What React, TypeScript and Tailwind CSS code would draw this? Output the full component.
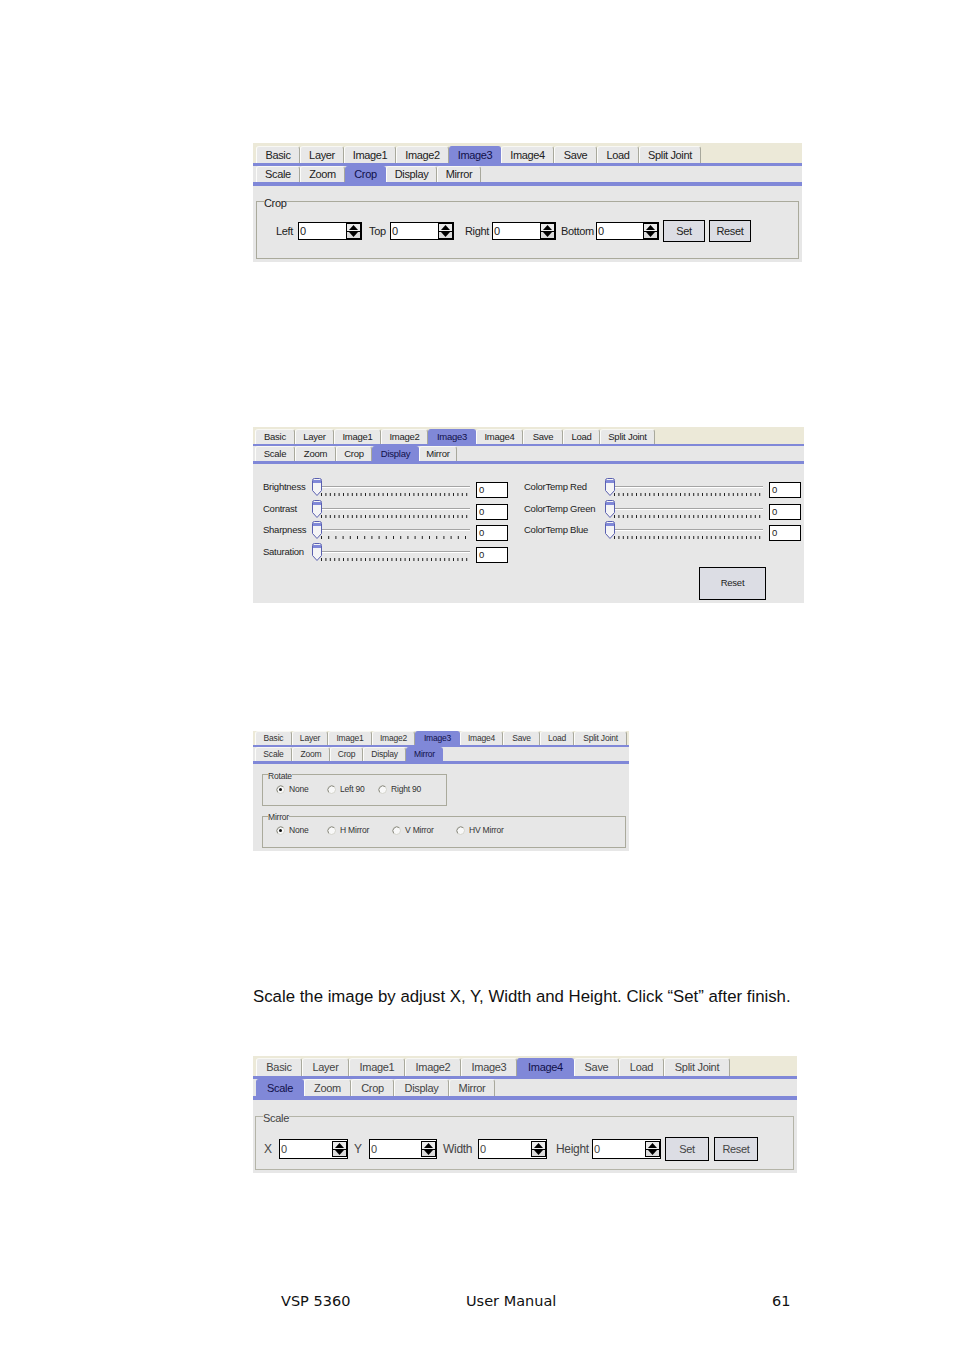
import React from 'react';

type Tab = { label: string; w: string };

const uiFont = "font-['Liberation_Sans',Arial,sans-serif]";

function TabRow({ tabs, active, className }: { tabs: Tab[]; active: string; className: string }) {
  return (
    <div className={`flex items-end ${className}`}>
      {tabs.map((t) => (
        <div
          key={t.label}
          className={`${t.w} flex h-full shrink-0 items-center justify-center overflow-hidden whitespace-nowrap rounded-t-[3px] border-r border-l border-t ${
            t.label === active
              ? 'border-[#8088d8] bg-[#8088d8] text-[#10104a]'
              : 'mt-[1px] border-t-[#f8f8f4] border-l-[#fcfcfa] border-r-[#a8a89c] bg-[#e8e8e8]'
          }`}
        >
          {t.label}
        </div>
      ))}
    </div>
  );
}

function Spinner() {
  return (
    <div className="flex h-[16px] w-[15px] shrink-0 flex-col border border-black bg-[#dcdcdc]">
      <div className="flex flex-1 items-center justify-center border-b border-black bg-[#ececec]">
        <svg width="9" height="5" viewBox="0 0 9 5"><path d="M4.5 0 9 5H0z" fill="#000" /></svg>
      </div>
      <div className="flex flex-1 items-center justify-center">
        <svg width="9" height="5" viewBox="0 0 9 5"><path d="M0 0h9L4.5 5z" fill="#000" /></svg>
      </div>
    </div>
  );
}

function SpinInput({ w, h }: { w: string; h: string }) {
  return (
    <div className={`${w} ${h} flex shrink-0 items-center justify-between border border-black bg-white pl-[1px]`}>
      <span>0</span>
      <Spinner />
    </div>
  );
}

function Thumb() {
  return (
    <svg width="10" height="18" viewBox="0 0 10 18" className="absolute top-0 left-0">
      <path d="M.5 2.5q0-2 2-2h5q2 0 2 2v10L5 17.5.5 12.5z" fill="#f4f4f6" stroke="#5a60b0" />
      <rect x="1" y="2" width="8" height="3" fill="#8088d8" />
    </svg>
  );
}

function Slider({ pitch = 4.4 }: { pitch?: number }) {
  const ticks: number[] = [];
  for (let x = 0; x <= 147; x += pitch) ticks.push(x);
  return (
    <div className="relative h-[18px] w-[158px] shrink-0">
      <div className="absolute top-[8px] left-[8px] h-[2px] w-[150px] border-t border-[#a4a4a4] bg-white" />
      <svg width="150" height="4" className="absolute top-[15px] left-[9px]">
        {ticks.map((x) => (
          <rect key={x} x={x} y="0" width="1" height="3" fill="#222" />
        ))}
      </svg>
      <Thumb />
    </div>
  );
}

function SliderRow({ label, labelW, pitch }: { label: string; labelW: string; pitch?: number }) {
  return (
    <div className="flex h-[21.67px] items-start">
      <div className={`${labelW} pt-[2px] whitespace-nowrap`}>{label}</div>
      <Slider pitch={pitch} />
      <div className="mt-[4px] ml-[6px] flex h-[16px] w-[32px] items-center border border-black bg-white pl-[2px]">0</div>
    </div>
  );
}

function Radio({ on }: { on?: boolean }) {
  return (
    <svg width="9" height="9" viewBox="0 0 9 9" className="shrink-0">
      <circle cx="4.5" cy="4.5" r="4" fill="#f8f8f8" stroke="#d4d4cc" />
      <path d="M1.7 7.3A4 4 0 0 1 7.3 1.7" fill="none" stroke="#8c8c84" />
      {on && <circle cx="4.5" cy="4.5" r="1.5" fill="#111" />}
    </svg>
  );
}

function RadioItem({ label, w, on }: { label: string; w: string; on?: boolean }) {
  return (
    <div className={`${w} flex shrink-0 items-center gap-[4px] whitespace-nowrap`}>
      <Radio on={on} />
      <span>{label}</span>
    </div>
  );
}

function Btn({ label, className }: { label: string; className: string }) {
  return <div className={`${className} flex shrink-0 items-center justify-center border border-black bg-[#dcdde4]`}>{label}</div>;
}

const tabs1: Tab[] = [
  { label: 'Basic', w: 'w-[44px]' },
  { label: 'Layer', w: 'w-[44px]' },
  { label: 'Image1', w: 'w-[52px]' },
  { label: 'Image2', w: 'w-[53px]' },
  { label: 'Image3', w: 'w-[52px]' },
  { label: 'Image4', w: 'w-[53px]' },
  { label: 'Save', w: 'w-[43px]' },
  { label: 'Load', w: 'w-[42px]' },
  { label: 'Split Joint', w: 'w-[62px]' },
];
const sub1: Tab[] = [
  { label: 'Scale', w: 'w-[44px]' },
  { label: 'Zoom', w: 'w-[45px]' },
  { label: 'Crop', w: 'w-[41px]' },
  { label: 'Display', w: 'w-[51px]' },
  { label: 'Mirror', w: 'w-[44px]' },
];
const tabs2: Tab[] = [
  { label: 'Basic', w: 'w-[40px]' },
  { label: 'Layer', w: 'w-[39px]' },
  { label: 'Image1', w: 'w-[47px]' },
  { label: 'Image2', w: 'w-[47px]' },
  { label: 'Image3', w: 'w-[48px]' },
  { label: 'Image4', w: 'w-[47px]' },
  { label: 'Save', w: 'w-[40px]' },
  { label: 'Load', w: 'w-[37px]' },
  { label: 'Split Joint', w: 'w-[55px]' },
];
const sub2: Tab[] = [
  { label: 'Scale', w: 'w-[40px]' },
  { label: 'Zoom', w: 'w-[41px]' },
  { label: 'Crop', w: 'w-[36px]' },
  { label: 'Display', w: 'w-[47px]' },
  { label: 'Mirror', w: 'w-[38px]' },
];
const tabs3: Tab[] = [
  { label: 'Basic', w: 'w-[37px]' },
  { label: 'Layer', w: 'w-[36px]' },
  { label: 'Image1', w: 'w-[44px]' },
  { label: 'Image2', w: 'w-[43px]' },
  { label: 'Image3', w: 'w-[45px]' },
  { label: 'Image4', w: 'w-[43px]' },
  { label: 'Save', w: 'w-[37px]' },
  { label: 'Load', w: 'w-[34px]' },
  { label: 'Split Joint', w: 'w-[53px]' },
];
const sub3: Tab[] = [
  { label: 'Scale', w: 'w-[37px]' },
  { label: 'Zoom', w: 'w-[38px]' },
  { label: 'Crop', w: 'w-[33px]' },
  { label: 'Display', w: 'w-[43px]' },
  { label: 'Mirror', w: 'w-[37px]' },
];
const tabs4: Tab[] = [
  { label: 'Basic', w: 'w-[46px]' },
  { label: 'Layer', w: 'w-[47px]' },
  { label: 'Image1', w: 'w-[56px]' },
  { label: 'Image2', w: 'w-[56px]' },
  { label: 'Image3', w: 'w-[56px]' },
  { label: 'Image4', w: 'w-[57px]' },
  { label: 'Save', w: 'w-[45px]' },
  { label: 'Load', w: 'w-[45px]' },
  { label: 'Split Joint', w: 'w-[66px]' },
];
const sub4: Tab[] = [
  { label: 'Scale', w: 'w-[48px]' },
  { label: 'Zoom', w: 'w-[47px]' },
  { label: 'Crop', w: 'w-[43px]' },
  { label: 'Display', w: 'w-[55px]' },
  { label: 'Mirror', w: 'w-[46px]' },
];

function CropPanel() {
  return (
    <div className={`${uiFont} mt-[143px] h-[119px] w-[549px] bg-[#e7e7e7] text-[11px] tracking-[-0.35px] text-[#222]`}>
      <div className="h-[20px] bg-[#ece9d8] pt-[3px] pl-[3px]">
        <TabRow tabs={tabs1} active="Image3" className="h-[17px]" />
      </div>
      <div className="h-[3px] bg-[#8088d8]" />
      <TabRow tabs={sub1} active="Crop" className="h-[16px] pl-[3px]" />
      <div className="h-[4px] bg-[#8088d8]" />
      <fieldset className="mx-[3px] mt-[7px] h-[66px] border border-[#aaaa9c] pl-[7px]">
        <legend className="pt-[3px] leading-[14px]">Crop</legend>
        <div className="mt-[10px] flex items-center">
          <span className="ml-[12px] w-[22px]">Left</span>
          <SpinInput w="w-[64px]" h="h-[18px]" />
          <span className="ml-[7px] w-[21px]">Top</span>
          <SpinInput w="w-[64px]" h="h-[18px]" />
          <span className="ml-[11px] w-[27px]">Right</span>
          <SpinInput w="w-[64px]" h="h-[18px]" />
          <span className="ml-[5px] w-[35px]">Bottom</span>
          <SpinInput w="w-[63px]" h="h-[18px]" />
          <Btn label="Set" className="ml-[4px] h-[22px] w-[42px]" />
          <Btn label="Reset" className="ml-[4px] h-[22px] w-[42px]" />
        </div>
      </fieldset>
    </div>
  );
}

function DisplayPanel() {
  return (
    <div className={`${uiFont} mt-[165px] h-[176px] w-[551px] bg-[#e7e7e7] text-[9.5px] tracking-[-0.25px] text-[#222]`}>
      <div className="h-[17px] bg-[#ece9d8] pt-[2px] pl-[2px]">
        <TabRow tabs={tabs2} active="Image3" className="h-[15px]" />
      </div>
      <div className="h-[2px] bg-[#8088d8]" />
      <TabRow tabs={sub2} active="Display" className="h-[15px] pl-[2px]" />
      <div className="h-[3px] bg-[#8088d8]" />
      <div className="flex pt-[14px] pl-[10px]">
        <div>
          <SliderRow label="Brightness" labelW="w-[49px]" />
          <SliderRow label="Contrast" labelW="w-[49px]" />
          <SliderRow label="Sharpness" labelW="w-[49px]" pitch={7.2} />
          <SliderRow label="Saturation" labelW="w-[49px]" />
        </div>
        <div className="ml-[16px]">
          <SliderRow label="ColorTemp Red" labelW="w-[81px]" />
          <SliderRow label="ColorTemp Green" labelW="w-[81px]" />
          <SliderRow label="ColorTemp Blue" labelW="w-[81px]" />
          <Btn label="Reset" className="mt-[24px] ml-[175px] h-[33px] w-[67px]" />
        </div>
      </div>
    </div>
  );
}

function MirrorPanel() {
  return (
    <div className={`${uiFont} mt-[128px] h-[120px] w-[376px] bg-[#e7e7e7] text-[8.5px] tracking-[-0.2px] text-[#333]`}>
      <div className="h-[14px] bg-[#ece9d8] pl-[2px]">
        <TabRow tabs={tabs3} active="Image3" className="h-[14px]" />
      </div>
      <div className="h-[2px] bg-[#8088d8]" />
      <TabRow tabs={sub3} active="Mirror" className="h-[14px] pl-[2px]" />
      <div className="h-[3px] bg-[#8088d8]" />
      <fieldset className="mt-[4px] ml-[9px] h-[38px] w-[185px] border border-[#aaaa9c] pl-[5px]">
        <legend className="pt-[3px] leading-[10px]">Rotate</legend>
        <div className="mt-[2px] flex items-center pl-[8px]">
          <RadioItem label="None" w="w-[51px]" on />
          <RadioItem label="Left 90" w="w-[51px]" />
          <RadioItem label="Right 90" w="w-[60px]" />
        </div>
      </fieldset>
      <fieldset className="mt-[4px] ml-[9px] h-[38px] w-[364px] border border-[#aaaa9c] pl-[5px]">
        <legend className="pt-[2px] leading-[10px]">Mirror</legend>
        <div className="mt-[2px] flex items-center pl-[8px]">
          <RadioItem label="None" w="w-[51px]" on />
          <RadioItem label="H Mirror" w="w-[65px]" />
          <RadioItem label="V Mirror" w="w-[64px]" />
          <RadioItem label="HV Mirror" w="w-[70px]" />
        </div>
      </fieldset>
    </div>
  );
}

function ScalePanel() {
  return (
    <div className={`${uiFont} mt-[49px] h-[117px] w-[544px] bg-[#e7e7e7] text-[11px] tracking-[-0.3px] text-[#444]`}>
      <div className="h-[20px] bg-[#ece9d8] pt-[2px] pl-[3px]">
        <TabRow tabs={tabs4} active="Image4" className="h-[18px]" />
      </div>
      <div className="h-[3px] bg-[#8088d8]" />
      <TabRow tabs={sub4} active="Scale" className="h-[17px] pl-[3px]" />
      <div className="h-[4px] bg-[#8088d8]" />
      <fieldset className="mt-[7px] ml-[2px] h-[63px] w-[539px] border border-[#b4b4a8] pl-[7px]">
        <legend className="pt-[4px] leading-[14px]">Scale</legend>
        <div className="mt-[12px] flex items-center">
          <span className="ml-[1px] w-[15px] text-[12px]">X</span>
          <SpinInput w="w-[69px]" h="h-[20px]" />
          <span className="ml-[6px] w-[15px] text-[12px]">Y</span>
          <SpinInput w="w-[68px]" h="h-[20px]" />
          <span className="ml-[6px] w-[35px] text-[12px]">Width</span>
          <SpinInput w="w-[69px]" h="h-[20px]" />
          <span className="ml-[9px] w-[36px] text-[12px]">Height</span>
          <SpinInput w="w-[69px]" h="h-[20px]" />
          <Btn label="Set" className="ml-[4px] h-[24px] w-[44px]" />
          <Btn label="Reset" className="ml-[5px] h-[24px] w-[44px]" />
        </div>
      </fieldset>
    </div>
  );
}

export default function App() {
  return (
    <div className="h-[1350px] w-[954px] overflow-hidden bg-white pl-[253px]">
      <CropPanel />
      <DisplayPanel />
      <MirrorPanel />
      <p className="mt-[136px] font-['Liberation_Sans',Arial,sans-serif] text-[16.8px] leading-[20px] whitespace-nowrap text-[#111]">
        Scale the image by adjust X, Y, Width and Height. Click “Set” after finish.
      </p>
      <ScalePanel />
      <div className="mt-[120px] flex font-['DejaVu_Sans',Verdana,sans-serif] text-[14.5px] leading-[16px] text-[#111]">
        <span className="ml-[28px] w-[185px]">VSP 5360</span>
        <span className="w-[306px]">User Manual</span>
        <span>61</span>
      </div>
    </div>
  );
}
